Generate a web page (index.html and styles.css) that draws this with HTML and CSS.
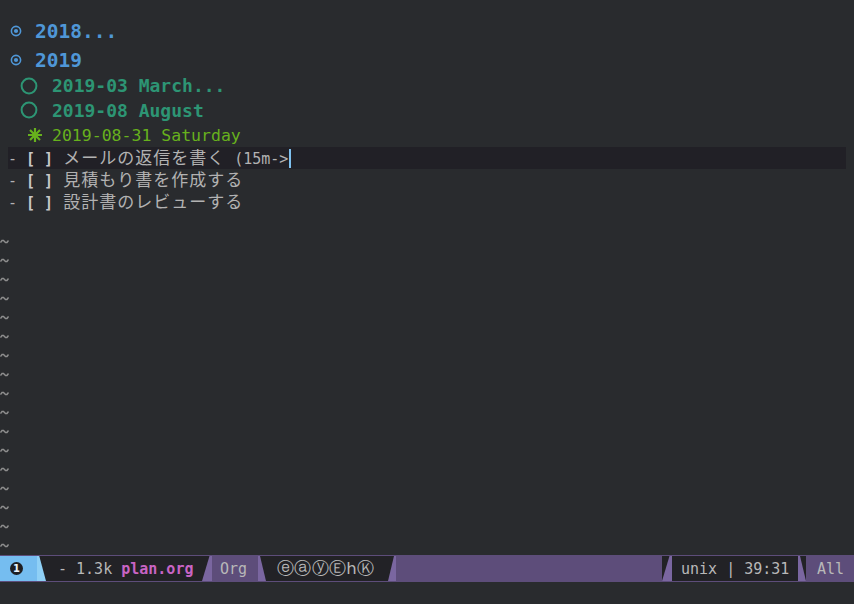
FILE: index.html
```html
<!DOCTYPE html>
<html>
<head>
<meta charset="utf-8">
<link rel="stylesheet" href="styles.css">
</head>
<body>
<div class="frame">
  <div class="buffer">
    <div class="row h1 ra">
      <svg class="b1" viewBox="0 0 12 12"><circle cx="6" cy="6" r="4.6" fill="none" stroke="#4f97d7" stroke-width="1.6"/><circle cx="6" cy="6" r="2.1" fill="#4f97d7"/></svg>
      <span>2018...</span>
    </div>
    <div class="row h1 rb">
      <svg class="b1" viewBox="0 0 12 12"><circle cx="6" cy="6" r="4.6" fill="none" stroke="#4f97d7" stroke-width="1.6"/><circle cx="6" cy="6" r="2.1" fill="#4f97d7"/></svg>
      <span>2019</span>
    </div>
    <div class="row h2 rc">
      <svg class="b2" viewBox="0 0 18 18"><circle cx="9" cy="9" r="7.4" fill="none" stroke="#2d9574" stroke-width="2"/></svg>
      <span>2019-03 March...</span>
    </div>
    <div class="row h2 rd">
      <svg class="b2" viewBox="0 0 18 18"><circle cx="9" cy="9" r="7.4" fill="none" stroke="#2d9574" stroke-width="2"/></svg>
      <span>2019-08 August</span>
    </div>
    <div class="row h3 re">
      <svg class="b3" viewBox="0 0 14 14"><g stroke="#67b11d" stroke-width="2.2" stroke-linecap="butt"><path d="M7 0V14M0 7H14M2 2L12 12M12 2L2 12"/></g><circle cx="7" cy="7" r="2.8" fill="#67b11d"/></svg>
      <span>2019-08-31 Saturday</span>
    </div>
    <div class="row item hl"><span class="txt">- <b class="cb">[ ]</b> <span class="jp">メールの返信を書く</span> (15m-&gt;</span><span class="cursor"></span></div>
    <div class="row item"><span class="txt">- <b class="cb">[ ]</b> <span class="jp">見積もり書を作成する</span></span></div>
    <div class="row item"><span class="txt">- <b class="cb">[ ]</b> <span class="jp">設計書のレビューする</span></span></div>
    <div class="row blank"></div>
  </div>
  <div class="tildes">
    <div class="tilde"><svg viewBox="0 0 9 5"><path d="M0.5 3.5L2 1.5H3.5L5.5 3.5H7L8.5 1.5"/></svg></div>
    <div class="tilde"><svg viewBox="0 0 9 5"><path d="M0.5 3.5L2 1.5H3.5L5.5 3.5H7L8.5 1.5"/></svg></div>
    <div class="tilde"><svg viewBox="0 0 9 5"><path d="M0.5 3.5L2 1.5H3.5L5.5 3.5H7L8.5 1.5"/></svg></div>
    <div class="tilde"><svg viewBox="0 0 9 5"><path d="M0.5 3.5L2 1.5H3.5L5.5 3.5H7L8.5 1.5"/></svg></div>
    <div class="tilde"><svg viewBox="0 0 9 5"><path d="M0.5 3.5L2 1.5H3.5L5.5 3.5H7L8.5 1.5"/></svg></div>
    <div class="tilde"><svg viewBox="0 0 9 5"><path d="M0.5 3.5L2 1.5H3.5L5.5 3.5H7L8.5 1.5"/></svg></div>
    <div class="tilde"><svg viewBox="0 0 9 5"><path d="M0.5 3.5L2 1.5H3.5L5.5 3.5H7L8.5 1.5"/></svg></div>
    <div class="tilde"><svg viewBox="0 0 9 5"><path d="M0.5 3.5L2 1.5H3.5L5.5 3.5H7L8.5 1.5"/></svg></div>
    <div class="tilde"><svg viewBox="0 0 9 5"><path d="M0.5 3.5L2 1.5H3.5L5.5 3.5H7L8.5 1.5"/></svg></div>
    <div class="tilde"><svg viewBox="0 0 9 5"><path d="M0.5 3.5L2 1.5H3.5L5.5 3.5H7L8.5 1.5"/></svg></div>
    <div class="tilde"><svg viewBox="0 0 9 5"><path d="M0.5 3.5L2 1.5H3.5L5.5 3.5H7L8.5 1.5"/></svg></div>
    <div class="tilde"><svg viewBox="0 0 9 5"><path d="M0.5 3.5L2 1.5H3.5L5.5 3.5H7L8.5 1.5"/></svg></div>
    <div class="tilde"><svg viewBox="0 0 9 5"><path d="M0.5 3.5L2 1.5H3.5L5.5 3.5H7L8.5 1.5"/></svg></div>
    <div class="tilde"><svg viewBox="0 0 9 5"><path d="M0.5 3.5L2 1.5H3.5L5.5 3.5H7L8.5 1.5"/></svg></div>
    <div class="tilde"><svg viewBox="0 0 9 5"><path d="M0.5 3.5L2 1.5H3.5L5.5 3.5H7L8.5 1.5"/></svg></div>
    <div class="tilde"><svg viewBox="0 0 9 5"><path d="M0.5 3.5L2 1.5H3.5L5.5 3.5H7L8.5 1.5"/></svg></div>
    <div class="tilde"><svg viewBox="0 0 9 5"><path d="M0.5 3.5L2 1.5H3.5L5.5 3.5H7L8.5 1.5"/></svg></div>
  </div>
  <div class="modeline">
    <div class="seg state"><span class="num">1</span></div>
    <div class="w w-blue sl"></div>
    <div class="seg dark file"><span>- 1.3k </span><b class="fname">plan.org</b></div>
    <div class="w w-pur sr"></div>
    <div class="seg pur mode">Org</div>
    <div class="w w-pur sl"></div>
    <div class="seg dark minor">ⓔⓐⓨⒺhⓀ</div>
    <div class="w w-pur sr"></div>
    <div class="seg fill"></div>
    <div class="w w-pur sr"></div>
    <div class="seg dark pos">unix | 39:31</div>
    <div class="w w-pur sl"></div>
    <div class="seg pur all">All</div>
  </div>
  <div class="echo"></div>
</div>
</body>
</html>
```
FILE: styles.css
```css
html, body {
  margin: 0;
  padding: 0;
  background: #292b2e;
}
.frame {
  width: 854px;
  height: 604px;
  overflow: hidden;
  background: #292b2e;
  display: flex;
  flex-direction: column;
  font-family: "DejaVu Sans Mono", "Noto Sans CJK JP", monospace;
  font-size: 15px;
  color: #b2b2b2;
}
.buffer {
  padding-top: 16px;
  display: flex;
  flex-direction: column;
}
.row {
  display: flex;
  align-items: center;
  white-space: pre;
}
.h1 {
  font-size: 19.5px;
  font-weight: bold;
  color: #4f97d7;
  padding-left: 10px;
}
.h1 .b1 { width: 12px; height: 12px; margin-right: 13px; }
.ra { height: 30px; }
.rb { height: 28px; }
.h2 {
  font-size: 18px;
  font-weight: bold;
  color: #2d9574;
  padding-left: 20px;
}
.h2 .b2 { width: 18px; height: 18px; margin-right: 14px; }
.rc { height: 23px; }
.rd { height: 26px; }
.h3 {
  font-size: 16.5px;
  color: #67b11d;
  padding-left: 28px;
}
.h3 .b3 { width: 14px; height: 14px; margin-right: 10px; }
.re { height: 24px; }
.item {
  height: 22px;
  line-height: 20px;
  margin: 0 8px;
}
.hl { background: #212026; }
.cb { color: #c8c8c8; font-weight: bold; }
.jp {
  display: inline-block;
  height: 20px;
  font-family: "Noto Sans CJK JP", sans-serif;
  font-size: 17px;
  line-height: 20px;
  letter-spacing: 1px;
  margin-left: 1px;
  color: #b2b2b2;
}
.cursor {
  display: inline-block;
  width: 2px;
  height: 19px;
  background: #7ec0ee;
  margin-left: 1px;
}
.blank { height: 19px; }
.tildes {
  display: flex;
  flex-direction: column;
}
.tilde {
  height: 19px;
  display: flex;
  align-items: center;
}
.tilde svg {
  width: 9px;
  height: 5px;
  fill: none;
  stroke: #8e8e8e;
  stroke-width: 1.4;
}
.modeline {
  height: 25px;
  border-top: 1px solid #5d4d7a;
  border-bottom: 1px solid #5d4d7a;
  background: #5d4d7a;
  display: flex;
  align-items: stretch;
  font-size: 15px;
  line-height: 20px;
  color: #b8b8b8;
}
.seg {
  display: flex;
  align-items: center;
  white-space: pre;
  flex: none;
}
.state {
  width: 37px;
  background: #75bdf0;
  justify-content: center;
  padding-right: 4px;
  box-sizing: border-box;
}
.num {
  width: 13px;
  height: 13px;
  border-radius: 50%;
  background: #1e1e22;
  color: #e8f4ff;
  font-family: "DejaVu Sans", sans-serif;
  font-size: 10px;
  line-height: 13px;
  font-weight: bold;
  display: flex;
  align-items: center;
  justify-content: center;
}
.dark { background: #222226; }
.pur { background: #5d4d7a; }
.file { width: 156px; padding-left: 12px; box-sizing: border-box; }
.fname { color: #c864c4; font-weight: bold; }
.mode { width: 46px; padding-left: 8px; box-sizing: border-box; }
.minor {
  width: 122px;
  padding-left: 11px;
  box-sizing: border-box;
  font-family: "DejaVu Sans", sans-serif;
  font-size: 16.5px;
  letter-spacing: 0.3px;
}
.fill { flex: 1; background: #5d4d7a; }
.pos { width: 126px; padding-left: 9px; box-sizing: border-box; }
.all { width: 48px; padding-left: 11px; box-sizing: border-box; }
.w {
  flex: none;
  width: 9px;
  background: #222226;
  position: relative;
}
.w::before {
  content: "";
  position: absolute;
  left: 0;
  top: 0;
  right: 0;
  bottom: 0;
}
.w-blue::before { background: #8fd0f6; }
.w-pur::before { background: #7a66a0; }
.sl::before { clip-path: polygon(0 0, 25% 0, 100% 100%, 0 100%); }
.sr::before { clip-path: polygon(75% 0, 100% 0, 100% 100%, 0 100%); }
.modeline .w:nth-child(2) { width: 9px; }
.modeline .w:nth-child(4) { width: 10px; }
.modeline .w:nth-child(6) { width: 8px; }
.modeline .w:nth-child(8) { width: 8px; }
.modeline .w:nth-child(10) { width: 10px; }
.modeline .w:nth-child(12) { width: 8px; }
.echo { flex: 1; background: #292b2e; }
```
